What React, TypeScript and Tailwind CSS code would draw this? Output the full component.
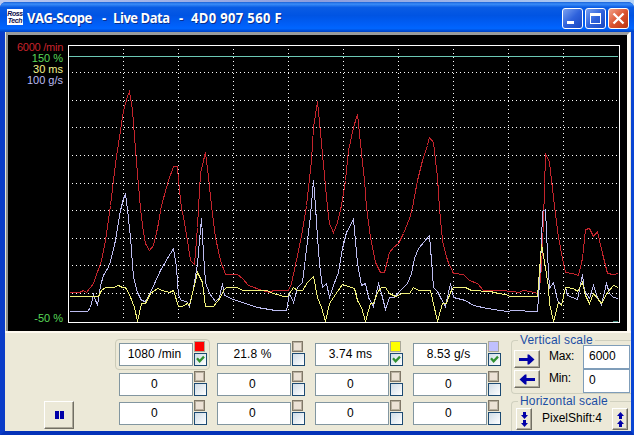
import type { ReactNode } from "react";

type Trace = { color: string; points: string };
type Channel = { value: string; color?: string; checked?: boolean };

const GRID_X = [123, 178, 233, 288, 343, 398, 453, 508, 563];
const GRID_Y = [72, 100, 127, 155, 183, 210, 238, 265, 293];

const TRACES: Trace[] = [
  {
    color: "#c4242c",
    points:
      "69,292 79,292 83,290 86,292 93,283 101,260 105,240 110,205 115,163 120,130 123,110 127,96 129,91 132,110 136,162 140,208 143,232 145,243 149,250 153,245 157,228 161,205 168,180 173,166 177,166 178,180 181,208 183,217 187,240 190,260 194,264 197,227 198,207 200,173 203,160 205,152 208,177 211,205 215,237 220,260 225,274 237,274 242,278 248,285 262,290 269,292 273,290 288,290 291,283 297,255 302,230 306,205 311,160 313,127 317,101 321,143 327,207 329,223 333,232 337,222 341,205 345,180 348,150 353,127 357,114 360,143 364,180 366,207 370,237 375,262 380,272 384,272 389,252 393,247 398,243 403,233 409,218 412,207 417,180 422,160 427,145 429,137 433,142 437,177 439,208 442,240 447,260 453,273 463,274 469,280 477,283 483,290 500,290 513,291 518,292 523,290 530,291 537,293 540,280 542,247 544,190 545,153 549,162 553,197 558,237 562,258 565,272 572,273 578,275 582,258 585,229 589,228 593,236 597,231 602,253 607,273 613,274 618,273",
  },
  {
    color: "#bcbcf0",
    points:
      "69,311 87,311 90,307 93,294 97,305 100,285 103,275 109,265 115,240 120,210 123,198 125,194 127,209 130,237 133,277 137,292 141,300 145,301 150,292 160,270 167,258 173,248 176,267 178,295 181,300 186,301 189,306 193,288 197,263 201,218 203,253 205,282 209,293 215,301 219,297 222,283 224,295 233,299 257,307 275,310 286,310 289,293 293,302 297,287 302,282 305,257 310,215 313,180 315,206 317,237 319,263 322,287 326,283 329,297 333,285 338,272 342,248 346,232 353,219 357,263 361,285 365,283 368,297 373,306 378,283 381,293 385,309 389,297 394,297 399,291 407,283 411,273 414,258 418,248 429,235 431,260 433,287 437,291 440,297 445,306 450,283 453,297 465,300 473,305 487,308 500,310 507,311 512,310 537,311 539,283 541,243 542,211 545,209 547,253 549,288 553,282 557,300 561,305 565,287 567,295 577,299 582,274 584,290 589,298 593,285 597,297 601,304 606,283 609,293 613,297 618,298",
  },
  {
    color: "#f2f27c",
    points:
      "69,296 98,296 101,290 105,287 113,287 118,285 122,287 125,287 129,294 134,307 137,321 141,303 145,303 150,293 157,288 162,290 169,292 173,290 178,306 182,306 187,303 189,305 193,289 197,272 202,282 205,306 213,306 220,297 223,290 226,287 237,287 242,290 267,290 270,292 283,296 287,296 293,287 297,290 302,290 307,282 313,276 317,297 321,307 325,321 329,303 337,291 342,284 354,288 357,300 361,307 365,321 370,303 373,303 377,292 381,287 385,287 389,293 395,296 402,293 409,293 413,287 418,290 430,290 437,321 442,303 446,303 450,292 453,287 465,287 471,290 490,291 498,293 505,294 510,296 537,296 539,270 541,244 545,267 548,287 549,303 553,321 558,302 561,305 565,287 573,288 577,291 582,282 585,295 589,303 593,293 601,303 607,292 613,285 618,287",
  },
];

const CHANNELS: Channel[][] = [
  [{ value: "1080 /min", color: "bg-[#ff0000]", checked: true }, { value: "0" }, { value: "0" }],
  [{ value: "21.8 %" }, { value: "0" }, { value: "0" }],
  [{ value: "3.74 ms", color: "bg-[#ffff00]", checked: true }, { value: "0" }, { value: "0" }],
  [{ value: "8.53 g/s", color: "bg-[#c0c0ff]", checked: true }, { value: "0" }, { value: "0" }],
];

const raised =
  "flex items-center justify-center bg-[#ece9d8] border border-t-white border-l-white border-r-[#716f64] border-b-[#716f64] shadow-[inset_-1px_-1px_0_#aca899]";

function TitleBar() {
  const btn =
    "flex h-[21px] w-[21px] items-center justify-center rounded-[3px] border border-white bg-gradient-to-br";
  return (
    <header className="flex h-[30px] items-center rounded-t-[6px] bg-[linear-gradient(180deg,#1a62d8_0%,#3a8cf8_7%,#0a5ce4_18%,#0054e3_45%,#0060fa_78%,#0066ff_88%,#0042c4_100%)] pr-[5px] pl-[7px]">
      <div className="flex h-4 w-4 flex-col items-center justify-center overflow-hidden bg-white text-[7px] leading-[7px] font-bold tracking-[-0.4px] text-[#10104c] italic">
        <span>Ross</span>
        <span>Tech</span>
      </div>
      <h1 className="flex h-full flex-1 scale-y-110 items-center pt-[2px] pl-1 font-['Open_Sans',sans-serif] text-[13px] font-bold whitespace-nowrap text-white [text-shadow:1px_1px_0_#0a2f8c]">
        <span className="w-[75px] tracking-[-0.45px]">VAG-Scope</span>
        <span className="w-[11px]">-</span>
        <span className="w-[66px] tracking-[-0.45px]">Live Data</span>
        <span className="w-[12px]">-</span>
        <span className="tracking-[0.35px]">4D0 907 560 F</span>
      </h1>
      <div className="flex gap-[2px] pt-[3px]">
        <div className={`${btn} from-[#7ba0f0] via-[#2f62dc] to-[#1846c0]`}>
          <svg width="19" height="19" shapeRendering="crispEdges">
            <rect x="4" y="12" width="7" height="3" fill="#fff" />
          </svg>
        </div>
        <div className={`${btn} from-[#7ba0f0] via-[#2f62dc] to-[#1846c0]`}>
          <svg width="19" height="19" shapeRendering="crispEdges">
            <path d="M4 4h11v11H4zM5 7v7h9V7z" fill="#fff" fillRule="evenodd" />
          </svg>
        </div>
        <div className={`${btn} from-[#f0a088] via-[#dc5430] to-[#b83410]`}>
          <svg width="19" height="19">
            <path d="M4.5 4.5l10 10M14.5 4.5l-10 10" stroke="#fff" strokeWidth="2.3" />
          </svg>
        </div>
      </div>
    </header>
  );
}

function Scope() {
  return (
    <section className="ml-[1px] flex h-[299px] w-[624px] border-t-[3px] border-r-[3px] border-l-2 border-t-[#9a9c9c] border-r-[#fffdf4] border-l-[#8f908c] bg-black pt-[7px]">
      <div className="flex h-[282px] w-[55px] flex-col items-end text-[11px] leading-[11px] whitespace-nowrap">
        <span className="tracking-[-0.25px] text-[#c8232c]">6000 /min</span>
        <span className="text-[#58d858]">150 %</span>
        <span className="text-[#f4f48c]">30 ms</span>
        <span className="text-[#bcbcf4]">100 g/s</span>
        <span className="mt-auto text-[#58d858]">-50 %</span>
      </div>
      <svg className="mt-[3px] ml-[5px] shrink-0" width="552" height="278" viewBox="68 45 552 278" shapeRendering="crispEdges">
        {GRID_X.map((x) => (
          <path key={x} d={`M${x + 0.5} 49V321`} stroke="#fff" strokeDasharray="1 3" />
        ))}
        {GRID_Y.map((y) => (
          <path key={y} d={`M72 ${y + 0.5}H619`} stroke="#fff" strokeDasharray="1 3" />
        ))}
        <path d="M69 56.5H618" stroke="#6cc8b4" />
        <path d="M613 321.5H618" stroke="#458c80" />
        {TRACES.map((t) => (
          <polyline key={t.color} points={t.points} fill="none" stroke={t.color} transform="translate(.5 .5)" />
        ))}
        <rect x="68.5" y="45.5" width="551" height="277" fill="none" stroke="#fff" />
      </svg>
    </section>
  );
}

function ChannelCell({ channel }: { channel: Channel }) {
  return (
    <div className="flex gap-[1px]">
      <div className="mt-[2px] flex h-[23px] w-[74px] items-center justify-center border border-[#8296a0] bg-white pr-[3px] pb-[2px] text-[12px] leading-none tracking-[0.1px]">
        {channel.value}
      </div>
      <div className="flex flex-col gap-[1px]">
        <div
          className={`h-[11px] w-[11px] border ${
            channel.color ? `${channel.color} border-[#aaa898]` : "border-[#807868] bg-[#ece2d6] shadow-[inset_0_0_0_1px_#b8b0a0]"
          }`}
        />
        <div className="h-[13px] w-[13px] border border-[#1c4a72] bg-gradient-to-br from-[#cfdce6] to-white">
          {channel.checked && (
            <svg width="11" height="11">
              <path d="M2 4.3L4.6 7.2L9 2.6" fill="none" stroke="#309030" strokeWidth="2.3" />
            </svg>
          )}
        </div>
      </div>
    </div>
  );
}

function ScaleGroup({ title, className, children }: { title: string; className: string; children: ReactNode }) {
  return (
    <fieldset className={`w-[120px] rounded-l-[4px] border border-r-0 border-[#d0d0bf] ${className}`}>
      <legend className="ml-[6px] px-[2px] text-[12px] leading-[14px] tracking-[0.15px] whitespace-nowrap text-[#1c4ea4]">
        {title}
      </legend>
      {children}
    </fieldset>
  );
}

function ArrowButton({ flip }: { flip?: boolean }) {
  return (
    <button className={`${raised} h-[18px] w-[26px]`}>
      <svg width="16" height="11" className={flip ? "rotate-180" : ""}>
        <path d="M0 4h8.5V0.5H10L15.5 5.5L10 10.5H8.5V7H0z" fill="#0000a8" />
      </svg>
    </button>
  );
}

function Controls() {
  return (
    <section className="flex h-[98px] overflow-hidden">
      <div className="w-[110px] pt-[68px] pl-[39px]">
        <button className={`${raised} h-[28px] w-[30px]`}>
          <svg width="9" height="8">
            <path d="M0 0h4v8H0zM5 0h4v8H5z" fill="#0000a8" />
          </svg>
        </button>
      </div>
      <div className="flex w-[396px] gap-[3px] pt-[6px]">
        {CHANNELS.map((column, i) => (
          <div key={i} className="grid w-[95px] grid-rows-[30px_31px_28px]">
            <div className={`h-[31px] rounded-[4px] border pt-[1px] pl-[3px] ${i === 0 ? "border-[#cbcbb8]" : "border-transparent"}`}>
              <ChannelCell channel={column[0]} />
            </div>
            <div className="pt-[2px] pl-1">
              <ChannelCell channel={column[1]} />
            </div>
            <div className="pl-1">
              <ChannelCell channel={column[2]} />
            </div>
          </div>
        ))}
      </div>
      <div className="flex w-[120px] flex-col">
        <ScaleGroup title="Vertical scale" className="h-[61px]">
          <div className="-mt-[2px] flex">
            <div className="flex flex-col gap-[2px] pt-[5px] pl-[2px]">
              <ArrowButton />
              <ArrowButton flip />
            </div>
            <div className="ml-[9px] flex w-[34px] flex-col gap-[8px] pt-[4px] text-[12px] leading-[14px] tracking-[-0.2px]">
              <span>Max:</span>
              <span>Min:</span>
            </div>
            <div className="flex w-[47px] flex-col">
              {["6000", "0"].map((v) => (
                <div key={v} className="flex h-[24px] items-center border border-[#7f9db9] bg-white pb-[3px] pl-[5px] text-[12px]">
                  {v}
                </div>
              ))}
            </div>
          </div>
        </ScaleGroup>
        <ScaleGroup title="Horizontal scale" className="h-[45px] shrink-0">
          <div className="flex pl-1">
            <button className={`${raised} h-[22px] w-[16px]`}>
              <svg width="7" height="15">
                <path d="M2 0h3v3h2L3.5 7L0 3h2zM2 8h3v3h2L3.5 15L0 11h2z" fill="#0000a8" />
              </svg>
            </button>
            <span className="w-[80px] pt-[3px] pl-[10px] text-[12px] leading-[14px] whitespace-nowrap">PixelShift:4</span>
            <button className={`${raised} h-[22px] w-[16px]`}>
              <svg width="7" height="15">
                <path d="M3.5 0L7 4H5v3H2V4H0zM3.5 8L7 12H5v3H2v-3H0z" fill="#0000a8" />
              </svg>
            </button>
          </div>
        </ScaleGroup>
      </div>
    </section>
  );
}

export default function App() {
  return (
    <div className="h-[435px] w-[634px] overflow-hidden bg-gradient-to-r from-[#b8c8f0] via-[#8c9cdc] via-50% to-[#b4d4f8] pt-[2px] font-['Liberation_Sans',Arial,sans-serif] text-black">
      <div className="h-[433px] rounded-t-[6px] bg-[#0a46d4]">
        <TitleBar />
        <div className="border-t-0 border-r-[3px] border-b-4 border-l-[5px] border-r-[#0a46d4] border-b-[#0432b8] border-l-[#0a3cc8]">
          <main className="h-[399px] overflow-hidden bg-[#ece9d8]">
            <Scope />
            <div className="h-[2px] bg-[#fffaf0]" />
            <Controls />
          </main>
        </div>
      </div>
    </div>
  );
}
